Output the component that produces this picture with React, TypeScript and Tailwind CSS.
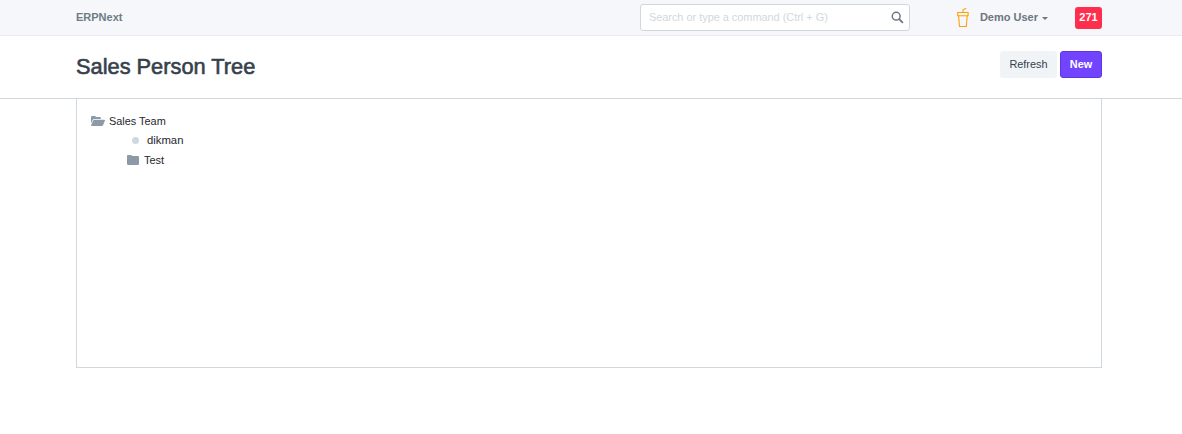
import React from "react";

function Cup() {
  return (
    <svg width="12" height="21" viewBox="0 0 12 21" fill="none" stroke="#ffa00a" strokeWidth="1.1">
      <path d="M.7 5.5h10.4v3.2H.7z" />
      <path d="M1.6 8.8l.9 10.7h6.8l.9-10.7" />
      <path d="M6 5.5V2.8l3.2-1.6" />
    </svg>
  );
}

function FolderOpen() {
  return (
    <svg width="14" height="10" viewBox="0 0 14 10" fill="#8d99a6">
      <path d="M0 1.2C0 .5.5 0 1.2 0h2.6c.6 0 1 .4 1.1 1h3.9c.6 0 1 .4 1 1v1H3.2C2.5 3 2 3.3 1.7 3.9L0 7.4z" />
      <path d="M3.2 3.8h10c.6 0 .9.5.7 1L12 9.2c-.2.5-.6.8-1.2.8H.8c-.6 0-.9-.5-.6-1l2-4.4c.2-.5.5-.8 1-.8z" />
    </svg>
  );
}

function Folder() {
  return (
    <svg width="12" height="10" viewBox="0 0 12 10" fill="#8d99a6">
      <path d="M0 1.2C0 .5.5 0 1.2 0h2.7c.6 0 1 .4 1.1 1h5.8c.7 0 1.2.5 1.2 1.2v6.6c0 .7-.5 1.2-1.2 1.2H1.2C.5 10 0 9.5 0 8.8z" />
    </svg>
  );
}

export default function App() {
  return (
    <div className="min-h-[434px] bg-white font-['Liberation_Sans',Arial,sans-serif] text-[#36414c]">
      <header className="h-[36px] bg-[#f5f7fa] border-b border-[#e9edf1] pl-[76px] pr-[80px] flex items-center">
        <span className="text-[11px] font-bold text-[#6c7d85]">ERPNext</span>
        <div className="ml-auto flex items-center">
          <div className="w-[270px] h-[27px] bg-white border border-[#d1d8dd] rounded-[3px] flex items-center pl-[8px] pr-[5px] text-[10.9px] text-[#d1d8dd]">
            <span>Search or type a command (Ctrl + G)</span>
            <svg className="ml-auto" width="13" height="13" viewBox="0 0 14 14" fill="none" stroke="#6c7680" strokeWidth="1.6">
              <circle cx="5.6" cy="5.6" r="4.2" />
              <path d="M8.8 8.8l4 4" strokeWidth="2" />
            </svg>
          </div>
          <div className="ml-[47px] flex items-center"><Cup /></div>
          <span className="ml-[11px] text-[11px] font-bold text-[#6c7680]">Demo User</span>
          <span className="ml-[4px] mt-[1px] w-0 h-0 border-x-[3px] border-x-transparent border-t-[3px] border-t-[#6c7680]" />
          <span className="ml-[27px] w-[27px] h-[22px] rounded-[3px] bg-[#ff2e4d] text-white text-[11px] font-bold flex items-center justify-center">271</span>
        </div>
      </header>
      <section className="h-[63px] border-b border-[#d1d8dd] pl-[76px] pr-[80px] flex items-center justify-between">
        <h1 className="mt-[1px] text-[21.8px] font-normal [-webkit-text-stroke:0.6px_#36414c] text-[#36414c]">Sales Person Tree</h1>
        <div className="flex gap-[3px] text-[10.9px] mb-[5px]">
          <button className="w-[57px] h-[27px] bg-[#f0f4f7] rounded-[3px] text-[#36414c]">Refresh</button>
          <button className="w-[42px] h-[27px] bg-[#7244ff] border border-[#5e35e0] rounded-[3px] text-white font-bold">New</button>
        </div>
      </section>
      <main className="ml-[76px] mr-[80px] h-[269px] border border-t-0 border-[#d1d8dd] pt-[12px] pl-[14px] text-[10.9px] text-[#1f272e]">
        <div className="h-[20px] flex items-center">
          <FolderOpen />
          <span className="ml-[4px]">Sales Team</span>
        </div>
        <div className="h-[19px] flex items-center pl-[41px]">
          <span className="w-[7px] h-[7px] -mt-[1px] rounded-full bg-[#d1d8dd]" />
          <span className="ml-[8px] text-[11.3px]">dikman</span>
        </div>
        <div className="h-[20px] flex items-center pl-[36px]">
          <Folder />
          <span className="ml-[5px] text-[11px]">Test</span>
        </div>
      </main>
    </div>
  );
}
